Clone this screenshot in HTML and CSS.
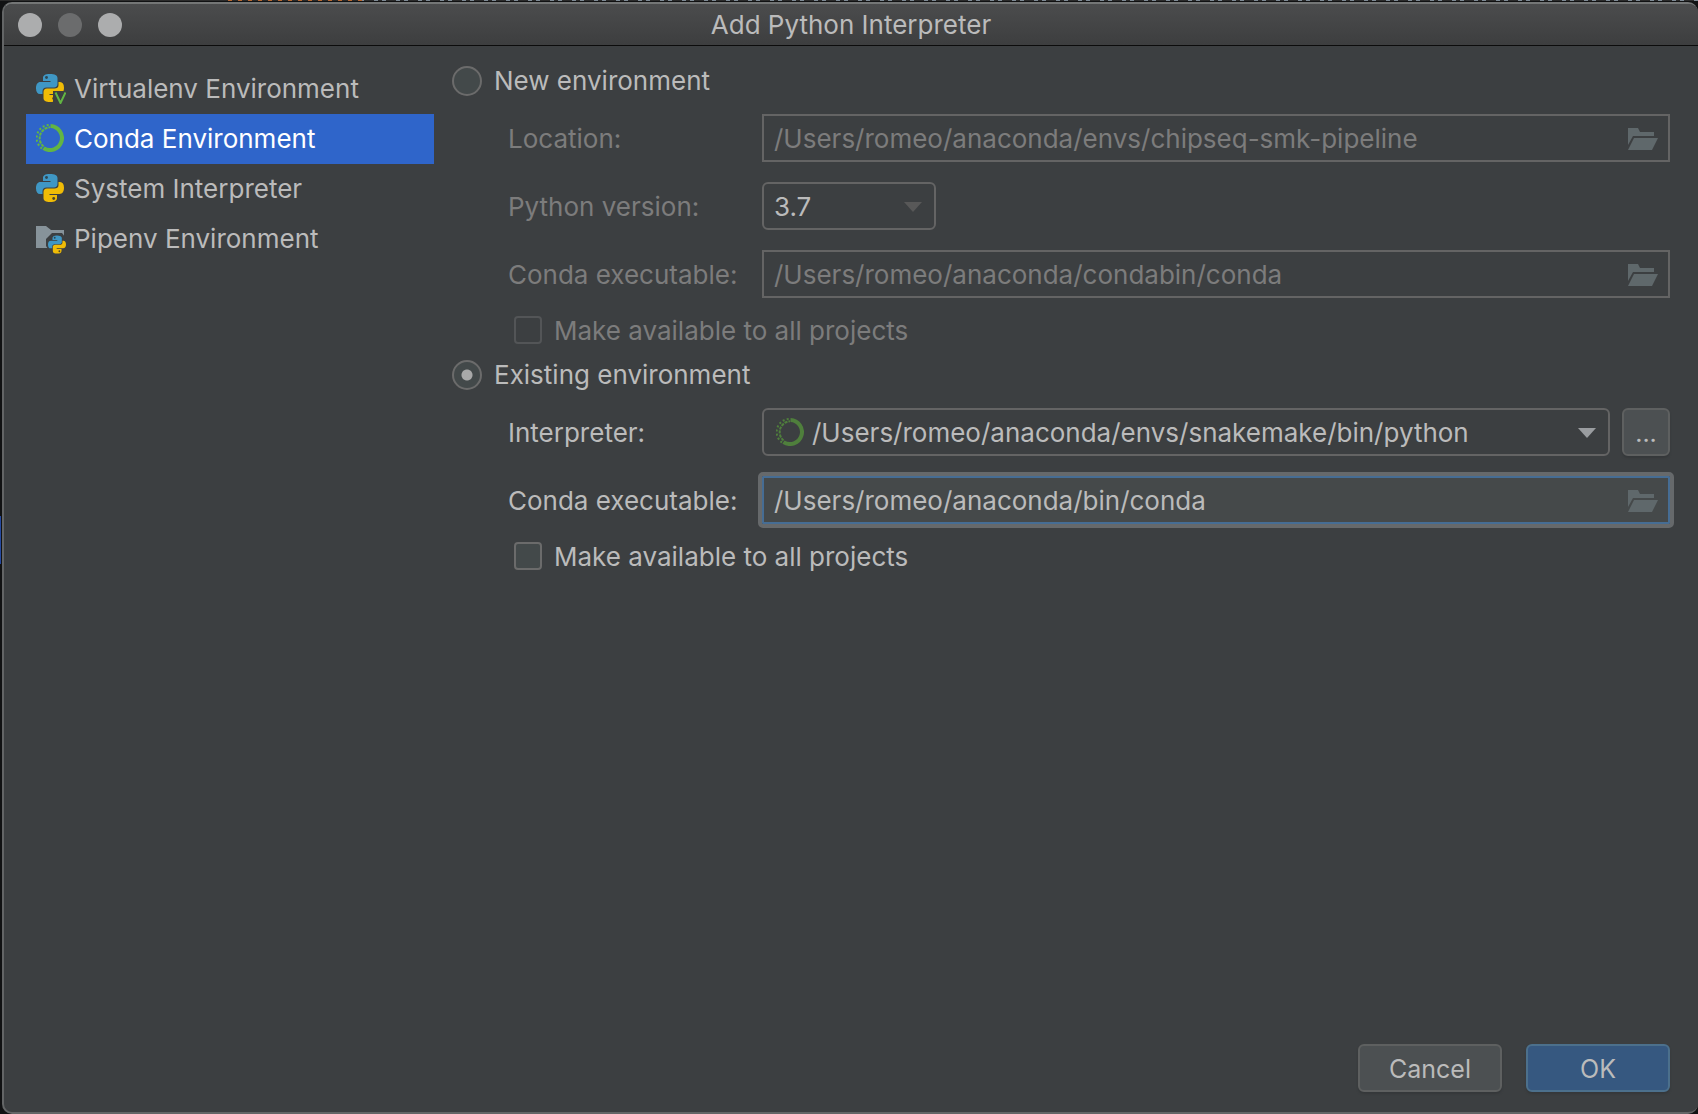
FILE: index.html
```html
<!DOCTYPE html>
<html lang="en">
<head>
<meta charset="utf-8">
<meta name="viewport" content="width=device-width, initial-scale=1">
<title>Add Python Interpreter</title>
<link rel="stylesheet" href="styles.css">
</head>
<body>
<svg class="symbols" aria-hidden="true">
  <symbol id="python" viewBox="0 0 28 28">
    <path fill="#3f97c4" d="M13.800 0C9 0 7 1.500 7 4v3h7.500v1H4.500C1.500 8 0 10.500 0 14.200S1.500 20 4 20h2.500v-2.500C6.500 14.800 8 13.500 10.500 13.500H18c2.200 0 3.500-1.500 3.500-3.500V4c0-2.700-2.700-4-7.700-4z"/>
    <path fill="#f0bc06" d="M14.200 28c4.800 0 6.800-1.500 6.800-4v-3h-7.500v-1h10c3 0 4.500-2.500 4.500-6.200S26.500 8 24 8h-1.500v3c0 2.600-1.800 3.500-4 3.500h-7.500c-2.200 0-3.500 1.500-3.500 3.500v6c0 2.700 2.200 4 6.700 4z"/>
    <circle cx="10.500" cy="3.500" r="1.400" fill="#2f4651"/>
    <circle cx="17.700" cy="24.500" r="1.400" fill="#4d4527"/>
  </symbol>
  <symbol id="conda" viewBox="0 0 28 28">
    <path fill="none" stroke="currentColor" stroke-width="4" d="M14.500 2A12 12 0 1 1 7.500 24.100"/>
    <path fill="none" stroke="currentColor" stroke-width="2" stroke-dasharray="3 1" d="M7.500 22.500A11 11 0 0 1 14 3.200"/>
    <path fill="none" stroke="currentColor" stroke-width="2" stroke-dasharray="2 2.200" d="M6 24.500A13 13 0 0 1 14 1"/>
  </symbol>
  <symbol id="folder-open" viewBox="0 0 30 22">
    <path fill="currentColor" d="M0 0h10l2 4h14v4H5L0 17z"/>
    <path fill="currentColor" d="M6 10h24l-6 12H0z"/>
  </symbol>
</svg>
<div class="dialog">
  <header class="titlebar">
    <div class="lights">
      <button class="light" type="button" aria-label="Close"></button>
      <button class="light light-dim" type="button" aria-label="Minimize" disabled></button>
      <button class="light" type="button" aria-label="Zoom"></button>
    </div>
    <h1 class="title">Add Python Interpreter</h1>
  </header>
  <div class="content">
    <nav class="sidebar">
      <a class="nav-item" href="#virtualenv">
        <svg class="nav-icon" viewBox="0 0 30 30"><use href="#python" width="28" height="28"/><path fill="#3c3f41" d="M17 17h13v13H17z"/><path fill="none" stroke="#62b543" stroke-width="2" d="M19.500 18.500 24.500 29l5-10.500"/></svg>
        Virtualenv Environment</a>
      <a class="nav-item nav-selected" href="#conda-env" aria-current="page">
        <svg class="nav-icon conda" viewBox="0 0 30 30"><use href="#conda" width="28" height="28"/></svg>
        Conda Environment</a>
      <a class="nav-item" href="#system">
        <svg class="nav-icon" viewBox="0 0 30 30"><use href="#python" width="28" height="28"/></svg>
        System Interpreter</a>
      <a class="nav-item" href="#pipenv">
        <svg class="nav-icon" viewBox="0 0 30 30"><path fill="#87939a" d="M0 2h10l5 4h13v18H0z"/><path fill="#3c3f41" d="M16 9h10l3 4v15H14l-4-6v-7z"/><use href="#python" x="12" y="11" width="18" height="19"/></svg>
        Pipenv Environment</a>
    </nav>
    <form class="form" id="env-form">
      <label class="choice"><input class="radio" type="radio" name="env">New environment</label>
      <div class="group group-disabled">
        <label class="caption" for="location">Location:</label>
        <div class="field">
          <input class="text" id="location" type="text" value="/Users/romeo/anaconda/envs/chipseq-smk-pipeline" disabled>
          <button class="browse" type="button" aria-label="Browse" disabled><svg class="folder"><use href="#folder-open"/></svg></button>
        </div>
        <label class="caption" for="version">Python version:</label>
        <div class="combo combo-small">
          <select class="select" id="version" disabled><option>3.7</option></select>
          <svg class="arrow" viewBox="0 0 18 10"><path fill="currentColor" d="M0 0h18l-9 10z"/></svg>
        </div>
        <label class="caption" for="new-conda">Conda executable:</label>
        <div class="field">
          <input class="text" id="new-conda" type="text" value="/Users/romeo/anaconda/condabin/conda" disabled>
          <button class="browse" type="button" aria-label="Browse" disabled><svg class="folder"><use href="#folder-open"/></svg></button>
        </div>
        <label class="check"><input class="box" type="checkbox" disabled><span class="caption">Make available to all projects</span></label>
      </div>
      <label class="choice"><input class="radio" type="radio" name="env" checked>Existing environment</label>
      <div class="group">
        <label class="caption" for="interpreter">Interpreter:</label>
        <div class="pair">
          <div class="combo">
            <svg class="combo-icon"><use href="#conda"/></svg>
            <select class="select select-icon" id="interpreter"><option>/Users/romeo/anaconda/envs/snakemake/bin/python</option></select>
            <svg class="arrow" viewBox="0 0 18 10"><path fill="currentColor" d="M0 0h18l-9 10z"/></svg>
          </div>
          <button class="button more" type="button">...</button>
        </div>
        <label class="caption" for="conda">Conda executable:</label>
        <div class="field field-focus">
          <input class="text" id="conda" type="text" value="/Users/romeo/anaconda/bin/conda">
          <button class="browse" type="button" aria-label="Browse"><svg class="folder"><use href="#folder-open"/></svg></button>
        </div>
        <label class="check"><input class="box" type="checkbox"><span class="caption">Make available to all projects</span></label>
      </div>
    </form>
  </div>
  <footer class="actions">
    <button class="button" type="button">Cancel</button>
    <button class="button primary" type="submit" form="env-form">OK</button>
  </footer>
</div>
</body>
</html>
```
FILE: styles.css
```css
* { box-sizing: border-box; }

/* The editor behind the dialog shows as a thin line along the top and left edges. */
body {
  margin: 0;
  min-height: 100vh;
  display: flex;
  padding: 2px 0 0 2px;
  background:
    linear-gradient(#2549a0, #2549a0) 0 516px / 1px 48px no-repeat,
    repeating-linear-gradient(90deg, #b8672f 0 4px, #2b2b2b 4px 10px) 228px 0 / 134px 1px no-repeat,
    linear-gradient(90deg, #2b2b2b, #2b2b2b) 0 0 / 362px 1px no-repeat,
    repeating-linear-gradient(90deg, #7f8b96 0 4px, #2b2b2b 4px 8px, #7f8b96 8px 12px, #2b2b2b 12px 22px) 0 0 / 100% 1px no-repeat,
    #111213;
  color: #bbbbbb;
  font: 26px/32px Inter, "Liberation Sans", sans-serif;
}

button, input, select { font: inherit; color: inherit; margin: 0; }

.symbols { position: absolute; width: 0; height: 0; }

.dialog {
  flex: 1;
  min-width: 0;
  display: flex;
  flex-direction: column;
  background: #3c3f41;
  border: 2px solid #636566;
  border-top-color: #747676;
  border-right: 0;
  border-radius: 10px;
  overflow: hidden;
}

.titlebar {
  display: grid;
  grid-template-columns: 1fr auto 1fr;
  align-items: center;
  height: 42px;
  padding: 0 14px;
  background: linear-gradient(#4b4c4d, #3d3e3f);
  border-bottom: 1px solid #0c0c0c;
}

.lights { display: flex; gap: 16px; }

.light {
  width: 24px;
  height: 24px;
  padding: 0;
  border: 0;
  border-radius: 50%;
  background: #acadae;
}

.light-dim { background: #6b6c6d; }

.title {
  margin: 0;
  font-size: 26px;
  font-weight: 400;
}

.content { flex: 1; display: flex; gap: 18px; padding: 18px 28px 0 22px; }

.sidebar { flex: 0 0 408px; }

.nav-item {
  display: flex;
  align-items: center;
  gap: 8px;
  height: 50px;
  padding-left: 10px;
  color: inherit;
  text-decoration: none;
  white-space: nowrap;
}

.nav-selected { background: #2f65ca; color: #ffffff; }

.nav-icon { width: 30px; height: 30px; flex: none; }

.conda { color: #62b543; }

.form { flex: 1; min-width: 0; }

.choice { display: flex; align-items: center; gap: 12px; height: 34px; }

.radio, .box {
  appearance: none;
  flex: none;
  border: 2px solid #6b6b6b;
  background: #43494a;
}

.radio { width: 30px; height: 30px; border-radius: 50%; }

.radio:checked { background: radial-gradient(circle, #a9a9a9 5px, #43494a 6px); }

.box { width: 28px; height: 28px; border-radius: 4px; }

.group {
  display: grid;
  grid-template-columns: 254px 1fr;
  row-gap: 20px;
  align-items: center;
  padding: 16px 0 0 56px;
}

.group-disabled { color: #7c7c7c; margin-bottom: 12px; }

.group-disabled .box { background: none; border-color: #535557; }

.caption { padding-top: 2px; }

.field, .combo {
  position: relative;
  display: flex;
  height: 48px;
  border: 2px solid #646464;
}

.combo { flex: 1; min-width: 0; border-radius: 6px; }

.combo-small { width: 174px; }

.text, .select {
  appearance: none;
  flex: 1;
  min-width: 0;
  padding: 2px 10px 0;
  border: 0;
  outline: 0;
  background: none;
  opacity: 1;
}

.select { color: #bbbbbb; }

.select-icon { padding-left: 8px; }

.combo-icon { width: 28px; height: 28px; margin: 8px 0 0 12px; color: #4f7f3c; }

.arrow {
  position: absolute;
  right: 12px;
  top: 18px;
  width: 18px;
  height: 10px;
  color: #9a9da0;
  pointer-events: none;
}

.combo-small .arrow { color: #585858; }

.browse {
  display: flex;
  align-items: center;
  padding: 2px 10px 0;
  border: 0;
  background: none;
  color: #5f686b;
}

.folder { width: 30px; height: 22px; }

.field-focus {
  border-color: #466d94;
  background: #45494a;
  outline: 4px solid #66696b;
  border-radius: 1px;
}

.check {
  grid-column: 1 / -1;
  display: flex;
  align-items: center;
  gap: 12px;
  height: 32px;
  padding-left: 6px;
  margin-top: -4px;
}

.pair { display: flex; gap: 12px; }

.button {
  width: 144px;
  height: 48px;
  padding: 2px 0 0;
  border: 2px solid #5e6060;
  border-radius: 6px;
  background: #4c5052;
  box-shadow: 0 2px 2px #35383a;
  font-size: 25px;
}

.more { width: 48px; }

.primary { background: #365880; border-color: #4c708c; }

.actions {
  display: flex;
  justify-content: flex-end;
  gap: 24px;
  padding: 0 28px 20px;
}
```
